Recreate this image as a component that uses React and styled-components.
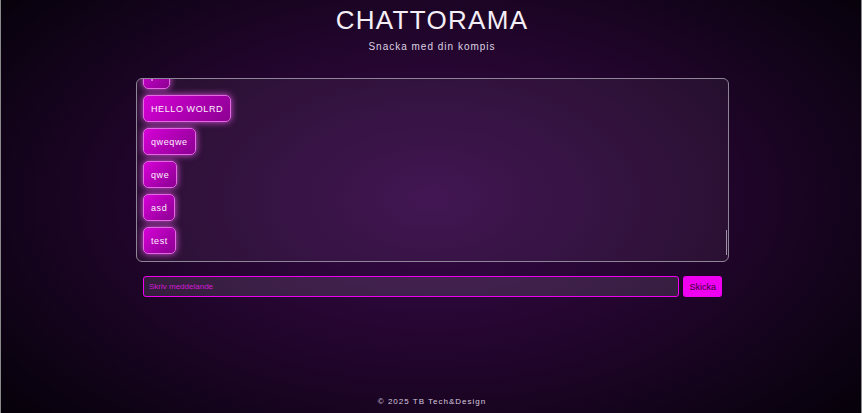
import React from 'react';
import styled, { createGlobalStyle } from 'styled-components';

/*--------------------------
    Variable
--------------------------*/
const MESSAGES = ['po', 'HELLO WOLRD', 'qweqwe', 'qwe', 'asd', 'test'];

/*--------------------------
    Styled
--------------------------*/
const GlobalStyle = createGlobalStyle`
    html, body {
        margin: 0;
        padding: 0;
        height: 100%;
    }
    body {
        font-family: "Liberation Sans", Arial, sans-serif;
        background: #000;
    }
`;

const Page = styled.div`
    display: flex;
    flex-direction: column;
    align-items: center;
    box-sizing: border-box;
    height: 413px;
    border-left: 1px solid #8a8a8a;
    border-right: 1px solid #8a8a8a;
    background: radial-gradient(ellipse 75% 90% at 50% 48%, #380a4a 0%, #21052b 45%, #0a0210 80%, #000 100%);
    color: #fff;
`;

const Header = styled.header`
    display: flex;
    flex-direction: column;
    align-items: center;
    padding-top: 5px;
    margin-left: 2px;
`;

const Title = styled.h1`
    margin: 0;
    font-size: 26px;
    font-weight: normal;
    letter-spacing: 1.3px;
    line-height: 30px;
    color: #f4eef6;
`;

const Subtitle = styled.p`
    margin: 6px 0 0 0;
    font-size: 10px;
    letter-spacing: 1px;
    line-height: 12px;
    color: #ddd2e2;
`;

const Main = styled.main`
    width: 593px;
    margin: 25px 0 0 3px;
`;

const ChatBox = styled.div`
    position: relative;
    box-sizing: border-box;
    height: 184px;
    border: 1px solid #8f8598;
    border-radius: 6px;
    background: rgba(255, 255, 255, 0.05);
    overflow: hidden;
`;

const MessageList = styled.div`
    display: flex;
    flex-direction: column;
    justify-content: flex-end;
    align-items: flex-start;
    gap: 6px;
    height: 100%;
    box-sizing: border-box;
    padding: 0 0 7px 6px;
`;

const Bubble = styled.div`
    flex-shrink: 0;
    box-sizing: border-box;
    height: 27px;
    padding: 0 7px;
    display: flex;
    align-items: center;
    border-radius: 5px;
    border: 1px solid #e468e4;
    background: linear-gradient(135deg, #d800d8 0%, #b000b4 50%, #8c0092 100%);
    box-shadow: 0 0 7px rgba(255, 90, 255, 0.85);
    font-size: 9px;
    letter-spacing: 0.6px;
    color: #fdf2fd;
`;

const ScrollThumb = styled.div`
    position: absolute;
    right: 1px;
    bottom: 6px;
    width: 1px;
    height: 25px;
    background: #9c94a4;
`;

const InputRow = styled.form`
    display: flex;
    gap: 4px;
    margin: 14px 7px 0 7px;
`;

const MessageInput = styled.input`
    flex: 1;
    box-sizing: border-box;
    height: 21px;
    padding: 0 5px;
    border: 1px solid #f000f0;
    border-radius: 3px;
    background: rgba(255, 255, 255, 0.1);
    font-family: "Liberation Sans", Arial, sans-serif;
    font-size: 8px;
    color: #fff;
    outline: none;

    &::placeholder {
        color: #d21ad2;
    }
`;

const SendButton = styled.button`
    box-sizing: border-box;
    height: 21px;
    padding: 0 6px;
    border: none;
    border-radius: 3px;
    background: #f000f0;
    font-family: "Liberation Sans", Arial, sans-serif;
    font-size: 9px;
    color: #3a003a;
`;

const Footer = styled.footer`
    margin: auto 0 0 2px;
    padding-bottom: 7px;
    font-size: 8px;
    letter-spacing: 1px;
    color: #d6cade;
`;

/*--------------------------
    Main Component
--------------------------*/
export default function App() {

    return (
        <>
            <GlobalStyle />
            <Page>
                <Header>
                    <Title>CHATTORAMA</Title>
                    <Subtitle>Snacka med din kompis</Subtitle>
                </Header>
                <Main>
                    <ChatBox>
                        <MessageList>
                            {MESSAGES.map((msg, i) => (
                                <Bubble key={i}>{msg}</Bubble>
                            ))}
                        </MessageList>
                        <ScrollThumb />
                    </ChatBox>
                    <InputRow onSubmit={e => e.preventDefault()}>
                        <MessageInput placeholder="Skriv meddelande" />
                        <SendButton type="submit">Skicka</SendButton>
                    </InputRow>
                </Main>
                <Footer>© 2025 TB Tech&amp;Design</Footer>
            </Page>
        </>
    );
}
